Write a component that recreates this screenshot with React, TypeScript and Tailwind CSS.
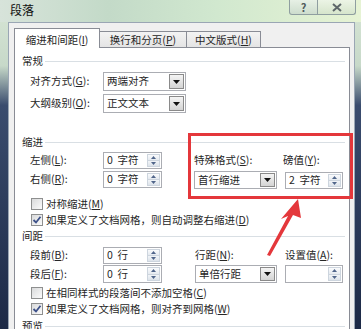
import type { ReactNode } from 'react';

const Acc = ({ k }: { k: string }) => (
  <>
    (<span className="underline">{k}</span>)
  </>
);

const Group = ({ title }: { title: string }) => (
  <div className="flex h-[14px] items-center pl-[7px] pr-[4px]">
    <span>{title}</span>
    <div className="ml-[2px] h-px flex-1 bg-[#d9dfe4]" />
  </div>
);

const DropButton = () => (
  <div className="my-[1px] mr-[1px] flex w-[15px] items-center justify-center border border-[#8a8a8a] bg-gradient-to-b from-[#f4f4f4] to-[#d4d4d4]">
    <svg width="7" height="4" viewBox="0 0 7 4">
      <path d="M0 0H7L3.5 4Z" fill="#111" />
    </svg>
  </div>
);

const Select = ({ value, className }: { value: string; className: string }) => (
  <div className={`flex border border-[#abadb3] bg-white ${className}`}>
    <div className="flex flex-1 items-center pl-[3px]">{value}</div>
    <DropButton />
  </div>
);

const Arrow = ({ up }: { up?: boolean }) => (
  <svg width="5" height="3" viewBox="0 0 5 3">
    <path d={up ? 'M0 3H5L2.5 0Z' : 'M0 0H5L2.5 3Z'} fill="#50658a" />
  </svg>
);

const Spin = ({ value, className }: { value: string; className: string }) => (
  <div className={`flex border border-[#abadb3] bg-white ${className}`}>
    <div className="flex flex-1 items-center whitespace-pre pl-[3px]">{value}</div>
    <div className="my-[1px] mr-[1px] flex w-[13px] flex-col">
      <div className="flex flex-1 items-center justify-center border border-[#cdd5de] bg-gradient-to-b from-[#fafbfc] to-[#e5eaf0]">
        <Arrow up />
      </div>
      <div className="flex flex-1 items-center justify-center border border-t-0 border-[#cdd5de] bg-gradient-to-b from-[#f2f5f8] to-[#dde3ea]">
        <Arrow />
      </div>
    </div>
  </div>
);

const Check = ({ checked, children, className = '' }: { checked?: boolean; children: ReactNode; className?: string }) => (
  <div className={`flex h-[16px] items-center pl-[16px] ${className}`}>
    <div className="flex h-[12px] w-[12px] items-center justify-center border border-[#8e8f8f] bg-gradient-to-br from-[#d9dadb] to-[#fbfbfb]">
      {checked && (
        <svg width="10" height="10" viewBox="0 0 10 10">
          <path d="M1.5 5L4 7.5L8.5 1.8" fill="none" stroke="#3d5189" strokeWidth="1.8" />
        </svg>
      )}
    </div>
    <span className="ml-[3px] whitespace-nowrap">{children}</span>
  </div>
);

const LabelRow = ({ label, children, className = '' }: { label: ReactNode; children: ReactNode; className?: string }) => (
  <div className={`flex items-center pl-[15px] ${className}`}>
    <div className="w-[73px] whitespace-nowrap">{label}</div>
    {children}
  </div>
);

export default function App() {
  return (
    <div className="relative flex h-[329px] w-[361px] flex-col overflow-hidden bg-[linear-gradient(180deg,#d8e6d6_0%,#c7d9c9_20%,#3a4c6e_32%,#1c2946_100%)] font-['Noto_Sans_CJK_SC','Liberation_Sans',sans-serif] text-[10.5px] leading-none text-[#262626]">
      {/* title bar */}
      <div className="flex h-[22px] shrink-0 items-start bg-[linear-gradient(90deg,#d7e3da_0%,#c3dac8_30%,#d1e8cf_60%,#e6f3d4_100%)]">
        <span className="ml-[10px] mt-[4px] text-[12px] text-[#111]">段落</span>
        <div className="ml-auto mr-[5px] flex h-[15px]">
          <div className="flex w-[29px] items-center justify-center rounded-bl-[3px] border border-t-0 border-[#8f9ea0] bg-gradient-to-b from-[#e9f1ea]/80 to-[#c9d8cc]/80 text-[11px] font-bold text-[#505a5c]">
            ?
          </div>
          <div className="flex w-[38px] items-center justify-center rounded-br-[3px] border border-l-0 border-t-0 border-[#8f9ea0] bg-gradient-to-b from-[#eef5ea]/80 to-[#d3e2ca]/80">
            <svg width="10" height="9" viewBox="0 0 10 9">
              <path d="M1 1L9 8M9 1L1 8" stroke="#5e676a" strokeWidth="2" />
            </svg>
          </div>
        </div>
      </div>

      {/* dialog body */}
      <div className="ml-[8px] mr-[6px] flex flex-1 flex-col border border-b-0 border-[#9aa6b4] bg-[#f0f0f0] pl-[5px] pr-[4px] pt-[5px]">
        {/* tabs */}
        <div className="flex h-[19px] shrink-0 items-end">
          <div className="relative z-10 -mb-px flex h-[20px] w-[86px] items-center justify-center border border-b-0 border-[#898c95] bg-white pt-[3px]">
            缩进和间距<Acc k="I" />
          </div>
          <div className="flex h-[16px] w-[87px] items-center justify-center border border-b-0 border-l-0 border-[#898c95] bg-gradient-to-b from-[#f3f3f3] to-[#e4e4e4] pt-[2px]">
            换行和分页<Acc k="P" />
          </div>
          <div className="flex h-[16px] w-[74px] items-center justify-center border border-b-0 border-l-0 border-[#898c95] bg-gradient-to-b from-[#f3f3f3] to-[#e4e4e4] pt-[2px]">
            中文版式<Acc k="H" />
          </div>
        </div>

        {/* panel */}
        <div className="flex flex-1 flex-col overflow-hidden border border-b-0 border-[#898c95] bg-white">
          <div className="mt-[6px]">
            <Group title="常规" />
          </div>
          <LabelRow className="mt-[4px]" label={<>对齐方式<Acc k="G" />:</>}>
            <Select value="两端对齐" className="h-[19px] w-[83px]" />
          </LabelRow>
          <LabelRow className="mt-[3px]" label={<>大纲级别<Acc k="O" />:</>}>
            <Select value="正文文本" className="h-[19px] w-[83px]" />
          </LabelRow>

          <div className="mt-[22px]">
            <Group title="缩进" />
          </div>
          <div className="mt-[3px] flex">
            <div className="flex w-[179px] flex-col gap-[2px]">
              <LabelRow label={<>左侧<Acc k="L" />:</>}>
                <Spin value="0  字符" className="h-[17px] w-[59px]" />
              </LabelRow>
              <LabelRow label={<>右侧<Acc k="R" />:</>}>
                <Spin value="0  字符" className="h-[17px] w-[59px]" />
              </LabelRow>
            </div>
            <div className="flex flex-col">
              <div className="flex h-[17px] items-center">特殊格式<Acc k="S" />:</div>
              <Select value="首行缩进" className="mt-[2px] h-[18px] w-[83px]" />
            </div>
            <div className="ml-[8px] flex flex-col">
              <div className="-ml-[2px] flex h-[17px] items-center">磅值<Acc k="Y" />:</div>
              <Spin value="2  字符" className="mt-[3px] h-[17px] w-[58px]" />
            </div>
          </div>
          <Check className="mt-[7px]">
            对称缩进<Acc k="M" />
          </Check>
          <Check checked>
            如果定义了文档网格，则自动调整右缩进<Acc k="D" />
          </Check>

          <div className="mt-[1px]">
            <Group title="间距" />
          </div>
          <div className="mt-[4px] flex">
            <div className="flex w-[180px] flex-col gap-[1px]">
              <LabelRow label={<>段前<Acc k="B" />:</>}>
                <Spin value="0  行" className="h-[17px] w-[59px]" />
              </LabelRow>
              <LabelRow label={<>段后<Acc k="F" />:</>}>
                <Spin value="0  行" className="h-[18px] w-[59px]" />
              </LabelRow>
            </div>
            <div className="flex flex-col">
              <div className="flex h-[17px] items-center">行距<Acc k="N" />:</div>
              <Select value="单倍行距" className="mt-[1px] h-[18px] w-[82px]" />
            </div>
            <div className="ml-[8px] flex flex-col">
              <div className="flex h-[17px] items-center">设置值<Acc k="A" />:</div>
              <Spin value="" className="mt-[1px] h-[18px] w-[58px]" />
            </div>
          </div>
          <Check className="mt-[2px]">
            在相同样式的段落间不添加空格<Acc k="C" />
          </Check>
          <Check checked>
            如果定义了文档网格，则对齐到网格<Acc k="W" />
          </Check>
          <div className="mt-[2px]">
            <Group title="预览" />
          </div>
        </div>
      </div>

      {/* red annotation */}
      <div className="absolute left-[188px] top-[133px] h-[66px] w-[165px] border-[3px] border-[#e4373b]" />
      <svg className="pointer-events-none absolute left-0 top-0" width="361" height="329" viewBox="0 0 361 329">
        <polygon points="298,199 301,218 293,215 270,256 267,255 288,216 281,219" fill="#e4373b" />
      </svg>
    </div>
  );
}
